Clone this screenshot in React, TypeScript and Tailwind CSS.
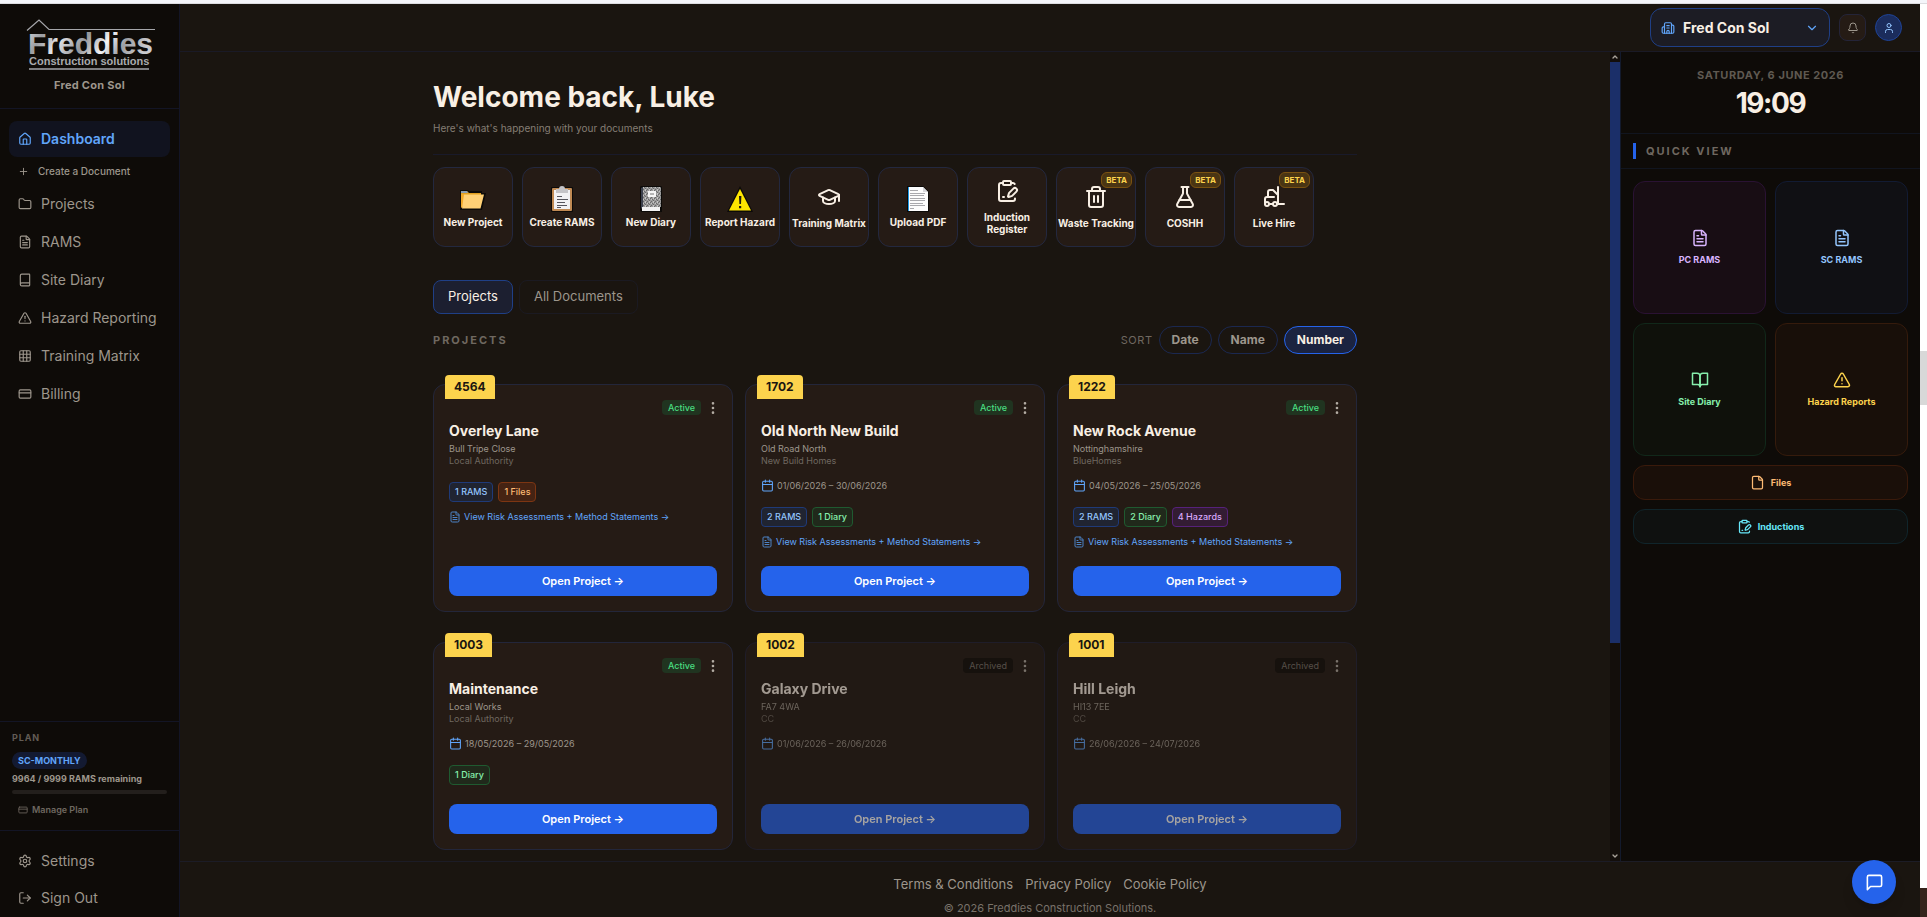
import React, { useState } from "react";
import {
  Bell,
  Book,
  Building2,
  Calendar,
  ChevronDown,
  ChevronUp,
  ClipboardPenLine,
  CreditCard,
  EllipsisVertical,
  File,
  FileText,
  FlaskConical,
  Folder,
  Forklift,
  GraduationCap,
  Grid3x3,
  House,
  LogOut,
  LucideIcon,
  Plus,
  Settings,
  Trash2,
  TriangleAlert,
  User,
} from "lucide-react";
import { FiBookOpen, FiMessageSquare } from "react-icons/fi";

const navItems: { label: string; icon: LucideIcon }[] = [
  { label: "Projects", icon: Folder },
  { label: "RAMS", icon: FileText },
  { label: "Site Diary", icon: Book },
  { label: "Hazard Reporting", icon: TriangleAlert },
  { label: "Training Matrix", icon: Grid3x3 },
  { label: "Billing", icon: CreditCard },
];

const FolderPic = () => (
  <svg viewBox="0 0 26 26" className="h-[26px] w-[26px]">
    <path d="M0 4h7l2 1h13v2h4l-4 17H0z" fill="#0c0a08" />
    <path d="M1 6l6-1 2 2h12v3H1z" fill="#e09f1f" />
    <path d="M1 5h6l1 2H1z" fill="#8a9db0" />
    <path d="M1 8h3v12l-3 2z" fill="#f0a92a" />
    <path d="M4 8.500h20l-3.500 14H2z" fill="#ffd176" />
  </svg>
);

const ClipboardPic = () => (
  <svg viewBox="0 0 26 26" className="h-[26px] w-[26px]">
    <rect x="2" y="1" width="22" height="25" rx="1" fill="#0c0a08" />
    <rect x="3" y="2" width="20" height="23" rx="1" fill="#c08a54" />
    <rect x="5" y="4" width="16" height="19" fill="#f1f1f4" />
    <path d="M7 3h3a3 3 0 0 1 6 0h3v4H7z" fill="#c4c4c8" />
    <path d="M8 10.500h5M8 13.500h11M8 16.500h8M8 19.500h10M8 21.500h4" stroke="#55555d" strokeWidth="1" />
  </svg>
);

const NotebookPic = () => (
  <svg viewBox="0 0 26 26" className="h-[26px] w-[26px]">
    <defs>
      <pattern id="speckle" width="4" height="4" patternUnits="userSpaceOnUse">
        <rect width="4" height="4" fill="#9a9a9a" />
        <path d="M0 0h1v1h-1zM2 1h1v1h-1zM1 3h1v1h-1zM3 2h1v1h-1z" fill="#6a6a6a" />
        <path d="M1 1h1v1h-1zM3 3h1v1h-1zM3 0h1v1h-1z" fill="#c4c4c4" />
      </pattern>
    </defs>
    <path d="M3 0h20l1 1v25H3l-1-2V1z" fill="#0c0a08" />
    <rect x="5" y="1" width="18" height="20" fill="url(#speckle)" />
    <path d="M3 2l2-1v20l-2 2z" fill="#3c414d" />
    <rect x="10" y="5" width="8" height="6" fill="#f5f5f5" />
    <path d="M12 8h4" stroke="#777" strokeWidth="1" />
    <rect x="4" y="21" width="18" height="4" fill="#f2f2f2" />
  </svg>
);

const WarningPic = () => (
  <svg viewBox="0 0 26 26" className="h-[26px] w-[26px]">
    <path d="M13 0L26 26H0z" fill="#0c0a08" />
    <path d="M13 3L24 24.500H2z" fill="#ffe600" />
    <path d="M12 10h2.400l-.4 8h-1.600zM12 20h2.200v2.200H12z" fill="#1f1a10" />
  </svg>
);

const PagePic = () => (
  <svg viewBox="0 0 26 26" className="h-[26px] w-[26px]">
    <path d="M2 0h16l6 6v20H2z" fill="#0c0a08" />
    <path d="M3 1h15l5 5v19H3z" fill="#fdfdfd" />
    <path d="M3 1h1v24H3z" fill="#1e9be8" />
    <path d="M18 1v5h5z" fill="#d7d7db" />
    <path
      d="M5 4.500h8M5 7.500h15M5 9.500h14M5 12.500h15M5 14.500h15M5 17.500h13M5 19.500h15M5 22.500h4"
      stroke="#a9a9ad"
      strokeWidth="1"
    />
  </svg>
);

type Action = { label: string; pic?: React.FC; icon?: LucideIcon; beta?: boolean };

const actions: Action[] = [
  { label: "New Project", pic: FolderPic },
  { label: "Create RAMS", pic: ClipboardPic },
  { label: "New Diary", pic: NotebookPic },
  { label: "Report Hazard", pic: WarningPic },
  { label: "Training Matrix", icon: GraduationCap },
  { label: "Upload PDF", pic: PagePic },
  { label: "Induction Register", icon: ClipboardPenLine },
  { label: "Waste Tracking", icon: Trash2, beta: true },
  { label: "COSHH", icon: FlaskConical, beta: true },
  { label: "Live Hire", icon: Forklift, beta: true },
];

const chipStyles = {
  rams: "border-[#1f3a78] bg-[#202431] text-[#93c5fd]",
  diary: "border-[#1f5a30] bg-[#20291b] text-[#86efac]",
  files: "border-[#7c3512] bg-[#452313] text-[#fdba74]",
  hazards: "border-[#56217a] bg-[#331c33] text-[#d8a8fb]",
};

type Project = {
  number: string;
  name: string;
  address: string;
  client: string;
  dates?: string;
  chips: { kind: keyof typeof chipStyles; text: string }[];
  link?: boolean;
  archived?: boolean;
};

const projects: Project[] = [
  {
    number: "4564",
    name: "Overley Lane",
    address: "Bull Tripe Close",
    client: "Local Authority",
    chips: [
      { kind: "rams", text: "1 RAMS" },
      { kind: "files", text: "1 Files" },
    ],
    link: true,
  },
  {
    number: "1702",
    name: "Old North New Build",
    address: "Old Road North",
    client: "New Build Homes",
    dates: "01/06/2026 – 30/06/2026",
    chips: [
      { kind: "rams", text: "2 RAMS" },
      { kind: "diary", text: "1 Diary" },
    ],
    link: true,
  },
  {
    number: "1222",
    name: "New Rock Avenue",
    address: "Nottinghamshire",
    client: "BlueHomes",
    dates: "04/05/2026 – 25/05/2026",
    chips: [
      { kind: "rams", text: "2 RAMS" },
      { kind: "diary", text: "2 Diary" },
      { kind: "hazards", text: "4 Hazards" },
    ],
    link: true,
  },
  {
    number: "1003",
    name: "Maintenance",
    address: "Local Works",
    client: "Local Authority",
    dates: "18/05/2026 – 29/05/2026",
    chips: [{ kind: "diary", text: "1 Diary" }],
  },
  {
    number: "1002",
    name: "Galaxy Drive",
    address: "FA7 4WA",
    client: "CC",
    dates: "01/06/2026 – 26/06/2026",
    chips: [],
    archived: true,
  },
  {
    number: "1001",
    name: "Hill Leigh",
    address: "HI13 7EE",
    client: "CC",
    dates: "26/06/2026 – 24/07/2026",
    chips: [],
    archived: true,
  },
];

const Logo = () => (
  <svg viewBox="0 0 130 53" className="h-[53px] w-[130px]" role="img" aria-label="Freddies Construction solutions">
    <defs>
      <linearGradient id="metal" x1="0" y1="0" x2="1" y2="0.2">
        <stop offset="0" stopColor="#d5d6da" />
        <stop offset="0.15" stopColor="#9b9da2" />
        <stop offset="0.3" stopColor="#e4e5e8" />
        <stop offset="0.5" stopColor="#94969b" />
        <stop offset="0.68" stopColor="#f4f4f6" />
        <stop offset="0.82" stopColor="#9d9fa4" />
        <stop offset="1" stopColor="#c9cacd" />
      </linearGradient>
    </defs>
    <path d="M2 12.500L14 2l10 9.500h106" fill="none" stroke="#a5a6aa" strokeWidth="1.200" />
    <text className="font-['Liberation_Sans'] font-bold">
      <tspan x="3" y="36" fill="url(#metal)" className="text-[30px]">
        Freddies
      </tspan>
      <tspan x="4" y="47" fill="#a9aaad" className="text-[11px]">
        Construction solutions
      </tspan>
    </text>
    <path d="M4 51h120" stroke="#a5a6aa" strokeWidth="1.400" />
  </svg>
);

const Sidebar = () => (
  <aside className="flex w-[180px] shrink-0 flex-col border-r border-[#131525] bg-[#0e0b08] text-[#9d968c]">
    <div className="flex flex-col items-center gap-1.5 border-b border-[#131525] px-3 pt-3.5 pb-[15px]">
      <Logo />
      <p className="text-[11px] leading-4 font-bold tracking-wide">Fred Con Sol</p>
    </div>

    <nav className="flex flex-col px-[9px] pt-3">
      <a
        href="#dashboard"
        className="flex h-9 items-center gap-[9px] rounded-lg bg-[#11131f] px-[9px] text-sm font-semibold text-[#60a5fa]"
      >
        <House size={14} />
        Dashboard
      </a>
      <a href="#create" className="flex h-[29px] items-center gap-[9px] px-[9px] text-[10px] font-medium">
        <Plus size={11} />
        Create a Document
      </a>
      <div className="flex flex-col gap-0.5">
        {navItems.map(({ label, icon: Icon }) => (
          <a key={label} href="#nav" className="flex h-9 items-center gap-[9px] px-[9px] text-sm">
            <Icon size={14} />
            {label}
          </a>
        ))}
      </div>
    </nav>

    <div className="mt-auto border-t border-[#131525] px-3 pt-2.5 pb-3.5">
      <p className="text-[9px] leading-3 font-bold tracking-widest text-[#625c55]">PLAN</p>
      <span className="mt-2 block w-fit rounded-full bg-[#131a32] px-1.5 text-[9px] leading-[17px] font-bold text-[#60a5fa]">
        SC-MONTHLY
      </span>
      <p className="mt-1 text-[9px] leading-3 font-bold">9964 / 9999 RAMS remaining</p>
      <div className="mt-[5px] h-1 rounded-full bg-[#231f1c]" />
      <a
        href="#plan"
        className="mt-2.5 flex items-center gap-1 px-1.5 text-[9px] leading-3 font-semibold text-[#6f6860]"
      >
        <CreditCard size={10} />
        Manage Plan
      </a>
    </div>

    <div className="flex flex-col gap-px border-t border-[#131525] px-[9px] pt-3 pb-px">
      <a href="#settings" className="flex h-9 items-center gap-[9px] px-[9px] text-sm">
        <Settings size={14} />
        Settings
      </a>
      <button type="button" className="flex h-9 items-center gap-[9px] px-[9px] text-sm">
        <LogOut size={14} />
        Sign Out
      </button>
    </div>
  </aside>
);

const Header = () => (
  <header className="flex h-12 shrink-0 items-center justify-end gap-[9px] border-b border-[#1a1a26] pr-[18px]">
    <label className="relative flex h-[39px] w-[180px] items-center">
      <Building2 size={14} className="pointer-events-none absolute left-[11px] text-[#60a5fa]" />
      <select
        aria-label="Company"
        className="h-full w-full appearance-none rounded-xl border border-[#1f3f86] bg-[#1c1c24] pr-8 pl-8 text-sm font-bold text-[#f8efe4]"
      >
        <option>Fred Con Sol</option>
      </select>
      <ChevronDown size={14} className="pointer-events-none absolute right-[11px] text-[#60a5fa]" />
    </label>
    <button
      type="button"
      aria-label="Notifications"
      className="flex h-[27px] w-[27px] items-center justify-center rounded-lg border border-[#242438] bg-[#251b15] text-[#9d968c]"
    >
      <Bell size={12} />
    </button>
    <button
      type="button"
      aria-label="Account"
      className="flex h-[27px] w-[27px] items-center justify-center rounded-full border border-[#1f4397] bg-[#1b2c5c] text-[#93c5fd]"
    >
      <User size={12} />
    </button>
  </header>
);

const ActionTile = ({ label, pic: Pic, icon: Icon, beta }: Action) => (
  <button
    type="button"
    className="relative flex h-20 w-20 flex-col items-center justify-center gap-1 rounded-xl border border-[#23283f] bg-[#251b15] text-[10px] leading-3 font-bold text-[#f8efe4]"
  >
    {Pic && <Pic />}
    {Icon && <Icon size={24} className="mb-1" />}
    <span className={label === "Induction Register" ? "px-2" : "whitespace-nowrap"}>{label}</span>
    {beta && (
      <span className="absolute top-1 right-[3px] rounded-md border border-[#7a5210] bg-[#4a3513] px-1 text-[8px] leading-[14px] text-[#fcd34d]">
        BETA
      </span>
    )}
  </button>
);

const ProjectCard = ({ project }: { project: Project }) => {
  const dim = project.archived ? "opacity-60" : "";
  return (
    <article
      className={
        project.archived
          ? "relative flex flex-col rounded-xl border border-[#1f1d29] bg-[#211914] p-[15px]"
          : "relative flex flex-col rounded-xl border border-[#23263a] bg-[#251b15] p-[15px]"
      }
    >
      <span className="absolute -top-2.5 left-[11px] rounded-t bg-[#fcd34d] px-[9px] text-xs leading-6 font-bold text-[#1a1510]">
        {project.number}
      </span>
      <div className={`flex flex-1 flex-col ${dim}`}>
        <div className="-mr-1 flex h-[15px] items-center justify-end gap-1">
          {project.archived ? (
            <span className="rounded bg-[#0f0c09] px-1.5 text-[9px] leading-[15px] text-[#7a736b]">Archived</span>
          ) : (
            <span className="rounded bg-[#203420] px-1.5 text-[9px] leading-[15px] font-medium text-[#4ade80]">
              Active
            </span>
          )}
          <button type="button" aria-label={`${project.name} menu`} className="text-[#b3aca3]">
            <EllipsisVertical size={16} />
          </button>
        </div>
        <h3 className="mt-1.5 text-sm leading-5 font-bold text-[#f8efe4]">{project.name}</h3>
        <p className="mt-0.5 text-[9px] leading-3 text-[#9d968c]">{project.address}</p>
        <p className="text-[9px] leading-3 text-[#6f6860]">{project.client}</p>
        {project.dates && (
          <p className="mt-3 flex items-center gap-[3px] text-[9px] leading-[13px] text-[#9d968c]">
            <Calendar size={13} className="text-[#60a5fa]" />
            {project.dates}
          </p>
        )}
        {project.chips.length > 0 && (
          <div className="mt-[15px] flex gap-[5px]">
            {project.chips.map((chip) => (
              <span
                key={chip.text}
                className={`rounded-sm border px-[5px] text-[9px] leading-[18px] font-medium ${chipStyles[chip.kind]}`}
              >
                {chip.text}
              </span>
            ))}
          </div>
        )}
        {project.link && (
          <a href="#rams" className="mt-2 -mb-0.5 flex items-center gap-[3px] text-[9px] leading-[14px] text-[#60a5fa]">
            <FileText size={12} className="text-[#4d83c6]" />
            View Risk Assessments + Method Statements →
          </a>
        )}
        <div className="mt-auto pt-[19px]">
          <button
            type="button"
            className="block h-[30px] w-full rounded-lg bg-[#2563eb] text-[11px] font-semibold text-white"
          >
            Open Project →
          </button>
        </div>
      </div>
    </article>
  );
};

const Dashboard = () => {
  const [tab, setTab] = useState("Projects");
  const [sort, setSort] = useState("Number");

  return (
    <main className="min-w-0 flex-1 overflow-hidden">
      <div className="mx-auto max-w-[924px]">
        <div className="border-b border-[#191a2a] pt-7 pb-[18px]">
          <h1 className="text-[28px] leading-[34px] font-bold text-[#f8efe4]">Welcome back, Luke</h1>
          <p className="mt-1.5 text-[10px] leading-4 text-[#857d74]">Here's what's happening with your documents</p>
        </div>

        <div className="mt-3 flex flex-wrap gap-[9px]">
          {actions.map((action) => (
            <ActionTile key={action.label} {...action} />
          ))}
        </div>

        <div className="mt-[33px] flex gap-1.5">
          {["Projects", "All Documents"].map((name) => (
            <button
              key={name}
              type="button"
              onClick={() => setTab(name)}
              className={
                tab === name
                  ? "h-[34px] rounded-lg border border-[#1f3f86] bg-[#1c1f30] px-3.5 text-[13px] text-[#f8efe4]"
                  : "h-[34px] rounded-lg border border-[#1b1a22] px-3.5 text-[13px] text-[#9d968c]"
              }
            >
              {name}
            </button>
          ))}
        </div>

        <div className="mt-3 flex items-center justify-between">
          <h2 className="text-[11px] font-bold tracking-[2px] text-[#6f6860]">PROJECTS</h2>
          <div className="flex items-center gap-1.5">
            <span className="text-[11px] tracking-wider text-[#6f6860]">SORT</span>
            {["Date", "Name", "Number"].map((name) => (
              <button
                key={name}
                type="button"
                onClick={() => setSort(name)}
                className={
                  sort === name
                    ? "h-7 rounded-full border border-[#2563eb] bg-[#1b2340] px-3 text-xs font-bold text-[#f8efe4]"
                    : "h-7 rounded-full border border-[#1b2850] px-3 text-xs font-bold text-[#9d968c]"
                }
              >
                {name}
              </button>
            ))}
          </div>
        </div>

        <div className="mt-[30px] grid grid-cols-3 gap-x-3 gap-y-[30px]">
          {projects.map((project) => (
            <ProjectCard key={project.number} project={project} />
          ))}
        </div>
      </div>
    </main>
  );
};

const ScrollTrack = () => (
  <div className="flex w-2.5 shrink-0 flex-col items-center bg-[#130e0b] text-[#a8a29a]">
    <div className="flex h-2.5 items-center">
      <ChevronUp size={8} strokeWidth={4} />
    </div>
    <div className="h-[581px] w-full bg-[#1b2f69]" />
    <div className="mt-auto flex h-2.5 items-center">
      <ChevronDown size={8} strokeWidth={4} />
    </div>
  </div>
);

const QuickView = () => (
  <aside className="w-[300px] shrink-0 border-l border-[#131a2c] bg-[#0e0b08]">
    <div className="border-b border-[#11151f] pt-4 pb-3.5 text-center">
      <p className="text-[11px] leading-[14px] font-bold tracking-wider text-[#5f5951]">SATURDAY, 6 JUNE 2026</p>
      <p className="mt-[5px] text-[28px] leading-8 font-bold tracking-tighter text-[#f8efe4]">19:09</p>
    </div>
    <div className="flex h-[35px] items-center gap-2.5 border-b border-[#11151f] pl-3">
      <span className="h-4 w-[3px] bg-[#2563eb]" />
      <h2 className="text-[11px] font-bold tracking-[2px] text-[#6f6860]">QUICK VIEW</h2>
    </div>
    <div className="grid grid-cols-2 gap-[9px] p-3 text-[9px] font-bold">
      <a
        href="#pc-rams"
        className="flex aspect-square flex-col items-center justify-center gap-1.5 rounded-xl border border-[#2a1233] bg-[#180d14] text-[#d8b4fe]"
      >
        <FileText size={18} />
        PC RAMS
      </a>
      <a
        href="#sc-rams"
        className="flex aspect-square flex-col items-center justify-center gap-1.5 rounded-xl border border-[#121b33] bg-[#101014] text-[#93c5fd]"
      >
        <FileText size={18} />
        SC RAMS
      </a>
      <a
        href="#site-diary"
        className="flex aspect-square flex-col items-center justify-center gap-1.5 rounded-xl border border-[#11281a] bg-[#0f110b] text-[#86efac]"
      >
        <FiBookOpen size={18} />
        Site Diary
      </a>
      <a
        href="#hazards"
        className="flex aspect-square flex-col items-center justify-center gap-1.5 rounded-xl border border-[#351b0c] bg-[#180f09] text-[#fcd34d]"
      >
        <TriangleAlert size={18} />
        Hazard Reports
      </a>
      <a
        href="#files"
        className="col-span-2 flex h-[35px] items-center justify-center gap-1.5 rounded-xl border border-[#3a1a0b] bg-[#1a0f09] text-[#fdba74]"
      >
        <File size={15} />
        Files
      </a>
      <a
        href="#inductions"
        className="col-span-2 flex h-[35px] items-center justify-center gap-1.5 rounded-xl border border-[#10252b] bg-[#0f1110] text-[#67e8f9]"
      >
        <ClipboardPenLine size={15} />
        Inductions
      </a>
    </div>
  </aside>
);

const App: React.FC = () => {
  return (
    <div className="flex h-screen flex-col overflow-hidden bg-white font-[Inter,'Liberation_Sans',sans-serif]">
      <div className="h-1 shrink-0 border-b border-[#dcdce0] bg-[#f4f5fa]" />
      <div className="flex min-h-0 flex-1">
        <div className="relative flex min-w-0 flex-1 bg-[#1a1510]">
          <Sidebar />
          <div className="flex min-w-0 flex-1 flex-col">
            <Header />
            <div className="flex min-h-0 flex-1">
              <Dashboard />
              <ScrollTrack />
              <QuickView />
            </div>
            <footer className="h-14 shrink-0 border-t border-[#1c1c26] pt-3.5 text-center text-[#9d968c]">
              <div className="flex justify-center gap-3 text-[13px] leading-4">
                <a href="#terms">Terms &amp; Conditions</a>
                <a href="#privacy">Privacy Policy</a>
                <a href="#cookies">Cookie Policy</a>
              </div>
              <p className="mt-2 text-[11px] leading-4 text-[#79726a]">© 2026 Freddies Construction Solutions.</p>
            </footer>
          </div>
          <button
            type="button"
            aria-label="Open chat"
            className="absolute right-6 bottom-[13px] flex h-11 w-11 items-center justify-center rounded-full bg-[#2563eb] text-white shadow-lg"
          >
            <FiMessageSquare size={19} />
          </button>
        </div>
        {/* outer window scrollbar */}
        <div className="flex w-[7px] shrink-0 flex-col">
          <div className="mt-[347px] h-[54px] bg-[#d8d8d8]" />
          <div className="mt-auto h-[29px] bg-[#35241c]" />
        </div>
      </div>
    </div>
  );
};

export default App;
